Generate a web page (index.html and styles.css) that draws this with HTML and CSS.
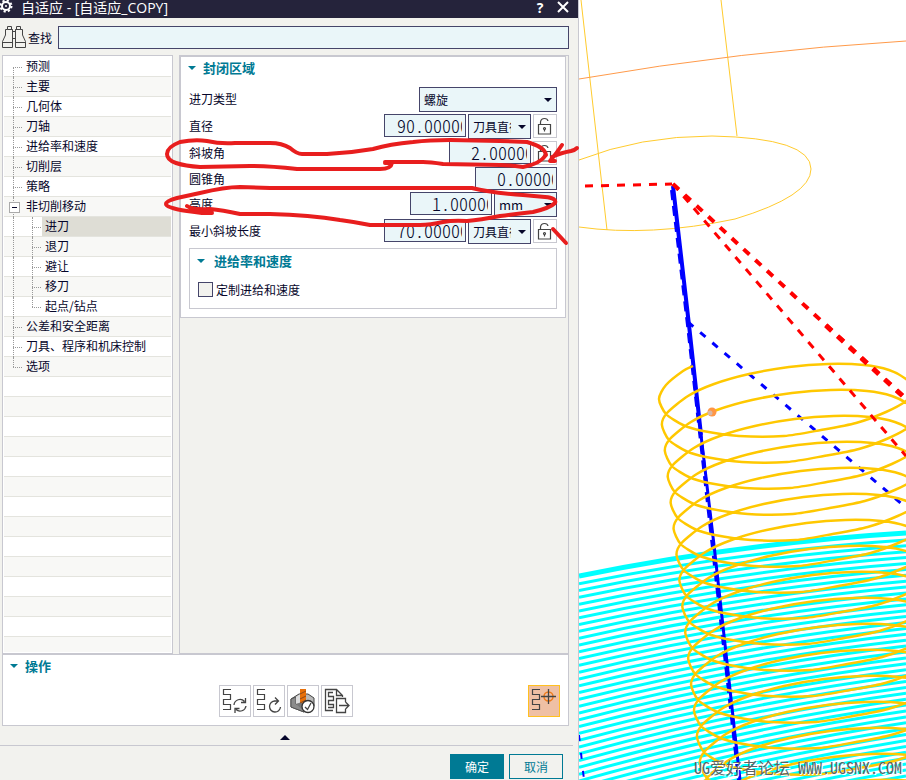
FILE: index.html
```html
<!DOCTYPE html>
<html lang="zh-CN">
<head>
<meta charset="utf-8">
<title>自适应 - [自适应_COPY]</title>
<link rel="stylesheet" href="styles.css">
</head>
<body>
<main class="app">
  <section class="dialog">
    <header class="titlebar">
      <svg class="gear" width="13" height="14" viewBox="0 0 13 14" aria-hidden="true">
        <circle cx="6" cy="6" r="4" fill="none" stroke="#fff" stroke-width="2"/>
        <circle cx="6" cy="6" r="5.5" fill="none" stroke="#fff" stroke-width="2" stroke-dasharray="2.2 2.12"/>
        <circle cx="6" cy="6" r="1" fill="#fff"/>
      </svg>
      <h1>自适应 - [自适应_COPY]</h1>
      <button class="title-btn help" aria-label="帮助">?</button>
      <button class="title-btn" aria-label="关闭"><svg width="12" height="12" viewBox="0 0 12 12"><path d="M1 1L11 11M11 1L1 11" stroke="#fff" stroke-width="2"/></svg></button>
    </header>

    <div class="content">
      <div class="search">
        <svg width="24" height="23" viewBox="0 0 24 23" fill="none" stroke="#444" aria-hidden="true">
          <path d="M.5 21.500V15.500L3.500 9V3.500H5.500V.500H9.500V3.500H10.500V21.500ZM.5 16.500H10.500M5.500 3.500H10.500M23.500 21.500V15.500L20.500 9V3.500H18.500V.500H14.500V3.500H13.500V21.500ZM13.500 16.500H23.500M18.500 3.500H13.500M10.500 5.500H13.500M10.500 12.500H13.500"/>
        </svg>
        <label for="find">查找</label>
        <input id="find" class="field" type="text">
      </div>

      <div class="panes">
        <nav class="tree">
          <ul class="tree-list">
            <li class="first">预测</li>
            <li>主要</li>
            <li>几何体</li>
            <li>刀轴</li>
            <li>进给率和速度</li>
            <li>切削层</li>
            <li>策略</li>
            <li class="open">非切削移动</li>
            <li class="sub first-sub selected"><span>进刀</span></li>
            <li class="sub">退刀</li>
            <li class="sub">避让</li>
            <li class="sub">移刀</li>
            <li class="sub last-sub">起点/钻点</li>
            <li>公差和安全距离</li>
            <li>刀具、程序和机床控制</li>
            <li class="last">选项</li>
          </ul>
        </nav>

        <div class="settings">
          <div class="group">
            <h2 class="heading">封闭区域</h2>
            <div class="rows">
              <div class="row">
                <label for="type">进刀类型</label>
                <span class="select wide"><select id="type" class="field"><option>螺旋</option></select></span>
              </div>
              <div class="row">
                <label for="dia">直径</label>
                <input id="dia" class="field num tens" value="90.00000">
                <span class="select"><select class="field" aria-label="直径单位"><option>刀具直径</option></select></span>
                <button class="lock" aria-label="锁定直径"><svg width="22" height="22" viewBox="0 0 22 22"><use href="#lock"/></svg></button>
              </div>
              <div class="row">
                <label for="ramp">斜坡角</label>
                <input id="ramp" class="field num" value="2.00000">
                <button class="lock" aria-label="锁定斜坡角"><svg width="22" height="22" viewBox="0 0 22 22"><use href="#lock"/></svg></button>
              </div>
              <div class="row">
                <label for="cone">圆锥角</label>
                <input id="cone" class="field num" value="0.00000">
              </div>
              <div class="row">
                <label for="height">高度</label>
                <input id="height" class="field num" value="1.00000">
                <span class="select unit"><select class="field" aria-label="高度单位"><option>mm</option></select></span>
              </div>
              <div class="row">
                <label for="minlen">最小斜坡长度</label>
                <input id="minlen" class="field num tens" value="70.00000">
                <span class="select"><select class="field" aria-label="长度单位"><option>刀具直径</option></select></span>
                <button class="lock" aria-label="锁定长度"><svg width="22" height="22" viewBox="0 0 22 22"><use href="#lock"/></svg></button>
              </div>
            </div>
            <div class="subgroup">
              <h2 class="heading">进给率和速度</h2>
              <label class="check"><input type="checkbox">定制进给和速度</label>
            </div>
          </div>
        </div>
      </div>

      <div class="actions">
        <h2 class="heading">操作</h2>
        <div class="toolbar">
          <div class="tools">
            <button class="tool" aria-label="重新生成"><svg width="30" height="30" viewBox="1 1 30 30">
              <use href="#path-s"/>
              <path d="M15 20A6 6 0 0 1 25.500 16.500M27 21A6 6 0 0 1 17 24.500M26.500 13V17.500H22M16 28V23.500H20.500" class="line"/></svg></button>
            <button class="tool" aria-label="重播"><svg width="30" height="30" viewBox="1 1 30 30">
              <use href="#path-s"/>
              <path d="M22 16A5.500 5.500 0 1 0 27.500 22M21 16H25.500M22 12.500L25.500 16L22 19.500" class="line"/></svg></button>
            <button class="tool" aria-label="确认"><svg width="30" height="30" viewBox="1 1 30 30">
              <path d="M4 14L12 9L21 9L27 13V21L17 27L4 22Z" fill="#b8b8b8" stroke="#444"/>
              <path d="M4 14L9 12V19L17 21V27L4 22Z" fill="#8b8b8b" stroke="#555"/>
              <path d="M9 12L15 8V17L9 19Z" fill="#ddd"/><path d="M9 19L15 17L24 20L17 26Z" fill="#777"/>
              <path d="M13 4H19V17L16 19L13 17Z" fill="#e8700a"/><path d="M13 9L19 6M13 14L19 11M13 18L19 15" stroke="#8a4a1a" stroke-width="1"/>
              <circle cx="21" cy="21.500" r="6" fill="#fff" stroke="#333" stroke-width="1.300"/><path d="M18 22L20.500 24.500L24 18" class="line"/></svg></button>
            <button class="tool" aria-label="后处理"><svg width="30" height="30" viewBox="1 1 30 30">
              <path d="M12 25.500H4.500V4.500H15.500L21.500 10.500V12M15.500 4.500V10.500H21.500M12 7.500H7.500V11.500H12.500V15.500H7.500V19.500H12.500V22.500H7M24.500 17V13.500H15.500V27.500H24.500V24M18 20.500H27.500M24.500 17L28 20.500L24.500 24" class="line"/></svg></button>
          </div>
          <button class="tool active" aria-label="刀轨点"><svg width="30" height="30" viewBox="1 1 30 30">
            <use href="#path-s"/>
            <circle cx="20.500" cy="11.500" r="4.500" fill="none" stroke="#f07a18" stroke-width="1.500"/>
            <path d="M13 11.500H28M20.500 4V19" class="line"/></svg></button>
        </div>
      </div>
    </div>

    <button class="collapse" aria-label="折叠"></button>
    <footer class="footer">
      <button class="btn primary">确定</button>
      <button class="btn">取消</button>
    </footer>

    <svg class="markup" width="580" height="250" viewBox="0 0 580 250" aria-hidden="true">
      <path d="M385 163H392Q391 169 380 169L297 169Q270 166 250 166L200 167Q185 166 176 163Q167 160 167 154Q167 147 180 142Q195 139 207 141Q220 144 235 143H270Q282 143 290 148Q297 154 302 154H327Q350 153 373 149Q390 144 413 142Q430 140 450 140L500 141L527 142Q545 147 546 155Q540 164 523 167Q510 165 500 165L443 164Q430 162 423 162H385"/>
      <path d="M212 213H202Q195 212 187 211Q166 208 166 204Q166 201 177 198L200 193Q225 187 240 187L270 188H472Q480 190 487 191Q505 194 523 195L545 197Q557 198 555 203Q550 208 533 212Q515 214 500 216Q480 220 467 221Q453 220 443 222Q430 225 420 225H370Q355 222 340 220Q310 215 270 214H240Q222 210 210 209Q192 210 187 206"/>
      <path d="M577 148Q575 150 571 151Q560 153 552 157M562 145Q556 154 550 161H555M553 229L566 243"/>
    </svg>
  </section>

  <section class="viewport">
    <svg class="scene" viewBox="579 0 327 780" preserveAspectRatio="xMinYMin slice" aria-hidden="true">
      <g fill="none" stroke="#ffcb2e" stroke-width="1">
        <path d="M581 0L607 230M721 0L737 136"/>
        <path d="M579 160Q640 136 712 136Q811 138 811 169Q811 196 735 219Q650 237 579 227"/>
        <path d="M579 79Q740 51 906 41" stroke="#ff9a4a"/>
      </g>
      <g id="passes" fill="none" stroke="#00ffff" stroke-width="3"></g>
      <path d="M579 576Q742 543 906 533" fill="none" stroke="#00ffff" stroke-width="5"/>
      <g fill="none" stroke="#0000ff">
        <path d="M673 186L689 325L701 435" stroke-width="4"/>
        <path d="M701 435L714 545L740 780" stroke-width="3"/>
        <path d="M672 190L688 325L739 780" stroke-width="4" stroke-dasharray="10 6"/>
        <path d="M688 322L903 505" stroke-width="3" stroke-dasharray="7 9"/>
        <path d="M579 735L584 780" stroke-width="2" stroke-dasharray="6 12"/>
      </g>
      <g id="helix" fill="none" stroke="#ffc800" stroke-width="2.500" stroke-linejoin="round"></g>
      <g fill="none" stroke="#ff0000">
        <path d="M585 186L672 184" stroke-width="3" stroke-dasharray="8 8"/>
        <path d="M673 184L906 399" stroke-width="4" stroke-dasharray="8 8"/>
        <path d="M820 320L906 399" stroke-width="5" stroke-dasharray="8 8" stroke-dashoffset="8"/>
        <path d="M673 184L906 456" stroke-width="3" stroke-dasharray="8 8"/>
      </g>
      <circle cx="712" cy="412" r="4.500" fill="#ff9645"/><circle cx="710" cy="413" r="2.500" fill="#d8b8a8"/>
    </svg>
    <p class="watermark">UG爱好者论坛 WWW.UGSNX.COM</p>
  </section>
</main>

<svg class="defs" width="0" height="0" aria-hidden="true">
  <defs>
    <g id="lock" fill="none" stroke="#444" stroke-width="1.200">
      <path d="M4.500 9.500H16.500V19H4.500ZM6.500 9.500V7Q7 3.500 10.500 3.500Q13.500 3.500 14 6"/>
      <circle cx="10.500" cy="13.500" r="1"/><path d="M10.500 14.500V16.500"/>
    </g>
    <path id="path-s" d="M12 4.500H4.500V9.500H11.500V14.500H4.500V19.500H11.500V24.500H4" fill="none" stroke="#444" stroke-width="1.200"/>
  </defs>
</svg>
<script src="script.js"></script>
</body>
</html>
```
FILE: styles.css
```css
* { box-sizing: border-box; }

:root {
  --ink: #06062a;
  --teal: #007a94;
  --line: #c8c8d0;
  --panel: #f2f2ee;
  --field: #eaf6f9;
  --edge: #45456a;
}

body {
  margin: 0;
  font: 12px/20px "Noto Sans CJK SC", sans-serif;
  color: var(--ink);
  background: #fff;
}

button, input, select { font: inherit; color: inherit; margin: 0; border-radius: 0; }
button { padding: 0; }
h1, h2, p, ul { margin: 0; padding: 0; }
svg { display: block; }
.defs { position: absolute; }

.app {
  display: grid;
  grid-template-columns: minmax(0, 579fr) minmax(0, 327fr);
  height: 100vh;
  min-height: 600px;
}

.dialog {
  position: relative;
  display: flex;
  flex-direction: column;
  background: var(--panel);
  border-right: 1px solid var(--line);
}

.titlebar {
  display: flex;
  align-items: flex-start;
  height: 18px;
  padding-right: 8px;
  background: #25233b;
  color: #fff;
}
.gear { margin-right: 8px; }
.titlebar h1 {
  flex: 1;
  font: 14px/16px "Liberation Sans", "Noto Sans CJK SC", sans-serif;
  font-family: "Open Sans", "Noto Sans CJK SC", sans-serif;
  white-space: nowrap;
}
.title-btn {
  display: flex;
  align-items: center;
  justify-content: center;
  width: 14px;
  height: 14px;
  margin-left: 9px;
  border: 0;
  background: none;
}
.title-btn.help { height: 16px; font: bold 14px/16px "Open Sans", sans-serif; color: #fff; }

.content {
  flex: 1;
  display: flex;
  flex-direction: column;
  min-height: 0;
  padding: 8px 9px 0 2px;
}

.field {
  border: 1px solid var(--edge);
  background: var(--field);
  outline: 0;
}

.search { display: flex; align-items: center; gap: 2px; margin-bottom: 6px; }
.search .field { flex: 1; min-width: 0; height: 23px; margin-left: 4px; padding: 0 4px; }

.panes { flex: 1; display: flex; gap: 6px; min-height: 0; }

.tree {
  flex: 0 0 171px;
  border: 1px solid var(--line);
  padding: 1px;
  background: #fff;
}
.tree-list {
  height: 100%;
  list-style: none;
  background: repeating-linear-gradient(#fff 0 19px, #e4e4de 19px 20px, #f8f8f6 20px 39px, #e4e4de 39px 40px);
}
.tree-list li {
  position: relative;
  height: 20px;
  line-height: 18px;
  padding-left: 22px;
  white-space: nowrap;
}
.tree-list li::before {
  content: "";
  position: absolute;
  left: 9px;
  top: 0;
  bottom: 0;
  border-left: 1px dotted #999;
}
.tree-list li::after {
  content: "";
  position: absolute;
  left: 9px;
  top: 10px;
  width: 9px;
  border-top: 1px dotted #999;
}
.tree-list .first::before { top: 10px; }
.tree-list .last::before { bottom: 10px; }
.tree-list .sub {
  margin-left: 9px;
  padding-left: 31px;
  border-left: 1px dotted #999;
}
.tree-list .sub::before, .tree-list .sub::after { left: 18px; }
.tree-list .last-sub::before { bottom: 10px; }
.tree-list .selected span { display: block; height: 19px; margin-left: -3px; padding-left: 3px; background: #deddd5; }
.tree-list .open::after {
  left: 5px;
  top: 5px;
  width: 9px;
  height: 9px;
  border: 1px solid #aaa;
  background: linear-gradient(var(--ink), var(--ink)) center / 5px 1px no-repeat #fff;
}

.settings { flex: 1; min-width: 0; border: 1px solid var(--line); padding-right: 2px; }
.group {
  border: 1px solid var(--line);
  padding: 0 8px 8px;
  background: #fff;
}
.heading {
  display: flex;
  align-items: center;
  gap: 7px;
  height: 22px;
  margin: 0 0 8px -1px;
  font-size: 13px;
  font-weight: bold;
  color: var(--teal);
}
.heading::before {
  content: "";
  border: 4px solid transparent;
  border-top-color: var(--teal);
  border-bottom: 0;
}

.rows { display: flex; flex-direction: column; gap: 2px; }
.row { display: flex; align-items: flex-start; gap: 2px; }
.row > label { flex: 1; line-height: 23px; }
.num {
  width: 82px;
  height: 23px;
  padding: 0 3px 2px 21px;
  font: 18px/19px "Noto Sans CJK SC", sans-serif;
  font-weight: 300;
  font-feature-settings: "hwid";
}
.num.tens { padding-left: 12px; }
.select { position: relative; width: 63px; }
.select.wide { width: 138px; }
.select .field {
  display: block;
  appearance: none;
  width: 100%;
  height: 25px;
  padding: 0 19px 0 4px;
}
.select.unit { font-size: 13px; }
.select::after {
  content: "";
  position: absolute;
  right: 5px;
  top: 11px;
  border: 4px solid transparent;
  border-top-color: var(--ink);
  border-bottom: 0;
}
.lock { width: 24px; height: 24px; border: 1px solid var(--line); background: #fff; }

.subgroup { margin-top: 4px; padding: 0 8px 2px; border: 1px solid var(--line); }
.subgroup .heading { gap: 9px; margin-bottom: 0; height: 24px; }
.check { display: flex; align-items: center; gap: 3px; height: 33px; }
.check input { appearance: none; width: 15px; height: 15px; border: 1px solid var(--edge); background: var(--panel); }

.actions { border: 1px solid var(--line); padding: 0 8px 8px; background: #fff; }
.toolbar { display: grid; grid-template-columns: 1fr auto 1fr; }
.tools { grid-column: 2; display: flex; gap: 2px; }
.tool { width: 32px; height: 32px; border: 1px solid var(--line); background: #fff; }
.tool.active { justify-self: end; border-color: #ffc020; background: #efc0a4; }
.line { fill: none; stroke: #444; stroke-width: 1.3; }

.collapse { height: 19px; border: 0; background: none; padding-right: 8px; }
.collapse::before {
  content: "";
  display: block;
  width: 0;
  margin: 4px auto 0;
  border: 5px solid transparent;
  border-bottom-color: var(--ink);
  border-top: 0;
}
.footer {
  display: flex;
  justify-content: flex-end;
  gap: 5px;
  margin-right: 5px;
  padding: 8px 10px 1px 0;
  border-top: 1px solid var(--line);
}
.btn { width: 54px; height: 25px; border: 1px solid var(--teal); background: var(--panel); color: var(--teal); }
.btn.primary { background: var(--teal); color: #fff; }

.markup {
  position: absolute;
  left: 0;
  top: 0;
  fill: none;
  stroke: #e81e1e;
  stroke-width: 4;
  stroke-linecap: round;
  stroke-linejoin: round;
  pointer-events: none;
}

.viewport { position: relative; overflow: hidden; background: #fff; }
.scene { width: 100%; height: 100%; }
.watermark {
  position: absolute;
  right: 4px;
  bottom: 3px;
  font: 16px/20px "Noto Sans CJK SC", sans-serif;
  font-feature-settings: "hwid";
  color: #5c6464;
  text-shadow: 1px 1px #fff;
  white-space: pre;
}
```
FILE: script.js
```js
const NS = "http://www.w3.org/2000/svg";

function addPath(parent, d) {
  const path = document.createElementNS(NS, "path");
  path.setAttribute("d", d);
  parent.appendChild(path);
}

// Clearing passes: stacked arcs, tighter on the right side.
const passes = document.getElementById("passes");
for (let i = 1; i < 44; i++) {
  const left = 577 + i * 6.8;
  const right = 534 + i * 5.9;
  const middle = (left + right) / 2 - 11;
  addPath(passes, `M579 ${left}Q742 ${middle} 906 ${right}`);
}

// Helical entry: each turn drops 26 units and drifts 2.92 to the right.
const turn = [
  [659, 399], [666, 414], [683, 425], [703, 431], [739, 436], [784, 436],
  [821, 430], [856, 423], [886, 412], [906, 401], [914, 390], [906, 379],
  [889, 370], [864, 365], [828, 364], [789, 367], [749, 374], [714, 384],
  [688, 396], [667, 413]
];
const points = [[693, 366], [683, 371], [666, 385]];
for (let k = 0; k < 17; k++) {
  for (const [x, y] of turn) points.push([x + k * 2.92, y + k * 26]);
}

// Catmull-Rom spline through the sampled points.
let d = `M${points[0].join(" ")}`;
for (let i = 0; i < points.length - 1; i++) {
  const a = points[Math.max(i - 1, 0)];
  const b = points[i];
  const c = points[i + 1];
  const e = points[Math.min(i + 2, points.length - 1)];
  d += `C${b[0] + (c[0] - a[0]) / 8} ${b[1] + (c[1] - a[1]) / 8}`
    + ` ${c[0] - (e[0] - b[0]) / 8} ${c[1] - (e[1] - b[1]) / 8}`
    + ` ${c[0]} ${c[1]}`;
}
addPath(document.getElementById("helix"), d);
```
